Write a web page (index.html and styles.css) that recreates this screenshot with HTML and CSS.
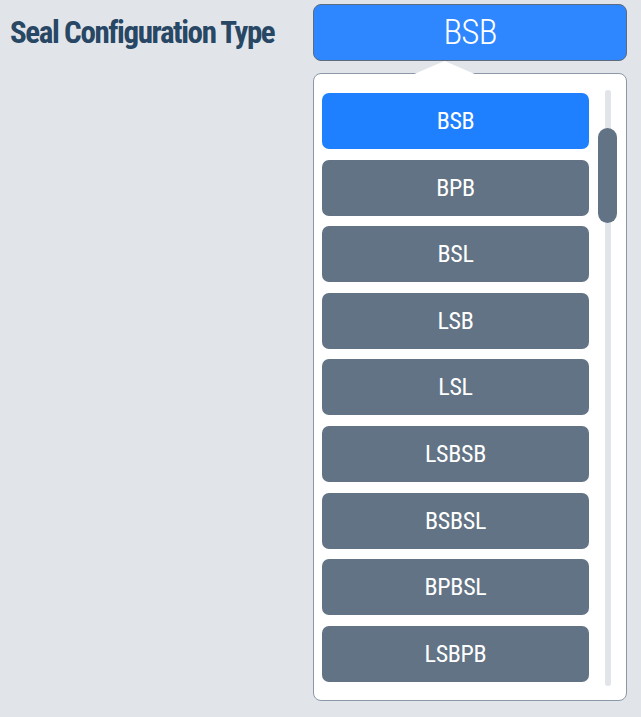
FILE: index.html
```html
<!DOCTYPE html>
<html lang="en">
<head>
  <meta charset="UTF-8" />
  <title>Seal Configuration Type</title>
  <link rel="stylesheet" href="styles.css">
</head>
<body>

<div class="field">
  <label class="field-label">Seal Configuration Type</label>

  <div class="select">
    <button class="select-btn">BSB</button>

    <div class="select-panel">
      <ul class="option-list">
        <li class="option selected">BSB</li>
        <li class="option">BPB</li>
        <li class="option">BSL</li>
        <li class="option">LSB</li>
        <li class="option">LSL</li>
        <li class="option">LSBSB</li>
        <li class="option">BSBSL</li>
        <li class="option">BPBSL</li>
        <li class="option">LSBPB</li>
      </ul>
      <div class="scrollbar">
        <div class="scroll-track"></div>
        <div class="scroll-thumb"></div>
      </div>
    </div>
  </div>
</div>

</body>
</html>
```
FILE: styles.css
```css
:root {
  --bg-base: #e1e5ea;
  --text-title: #284764;
  --blue: #2e87ff;
  --blue-active: #1f80ff;
  --slate: #627385;
  --border: #8b98a7;
}
* {
  box-sizing: border-box;
  margin: 0;
  padding: 0;
}

body {
  font-family: "Roboto Condensed", "Roboto", sans-serif;
  background: var(--bg-base);
  height: 717px;
}

.field {
  display: flex;
  align-items: flex-start;
}

.field-label {
  width: 313px;
  padding: 14px 0 0 10px;
  font-size: 31px;
  font-weight: 700;
  letter-spacing: -1.4px;
  color: var(--text-title);
}

.select {
  width: 314px;
  padding-top: 4px;
}

.select-btn {
  display: block;
  width: 100%;
  height: 57px;
  background: var(--blue);
  border: 1px solid #5c6b7d;
  border-radius: 8px;
  color: #fff;
  font-family: inherit;
  font-size: 35px;
  font-weight: 300;
  letter-spacing: -0.8px;
  cursor: pointer;
}

/* --- painel do dropdown --- */
.select-panel {
  position: relative;
  display: flex;
  height: 628px;
  margin-top: 12px;
  padding: 0 0 0 8px;
  background: #fff;
  border: 1px solid var(--border);
  border-radius: 8px;
}
.select-panel::before {
  content: '';
  position: absolute;
  top: -13px;
  left: 98px;
  width: 65px;
  height: 14px;
  background: #fff;
  clip-path: polygon(50% 0, 100% 100%, 0 100%);
}

.option-list {
  list-style: none;
  width: 267px;
  padding-top: 19px;
  display: flex;
  flex-direction: column;
  gap: 10.6px;
}

.option {
  height: 56px;
  display: flex;
  align-items: center;
  justify-content: center;
  background: var(--slate);
  border-radius: 7px;
  color: #fff;
  font-size: 24px;
  letter-spacing: -0.3px;
  cursor: pointer;
}
.option.selected {
  background: var(--blue-active);
}

.scrollbar {
  position: relative;
  width: 19px;
  margin: 16px 0 14px 9px;
  display: flex;
  justify-content: center;
}
.scroll-track {
  width: 6px;
  background: var(--bg-base);
  border-radius: 3px;
}
.scroll-thumb {
  position: absolute;
  top: 38px;
  left: 0;
  width: 19px;
  height: 95px;
  background: var(--slate);
  border-radius: 10px;
}
```
